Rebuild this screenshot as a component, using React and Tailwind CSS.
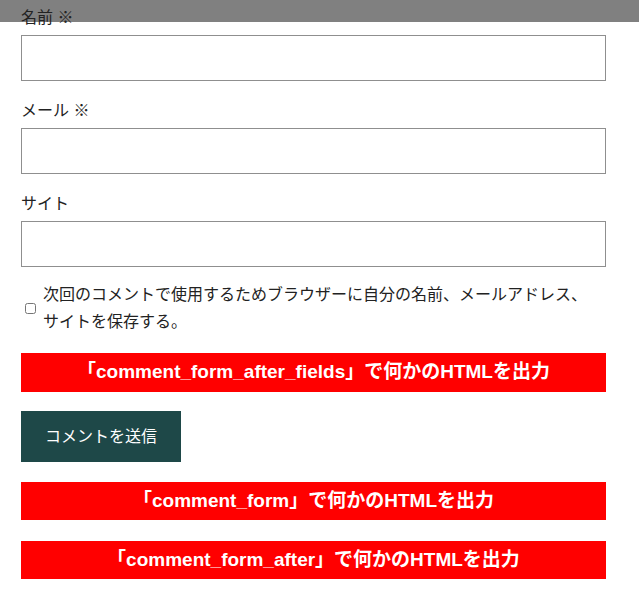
import React from "react";

const jp = { fontFamily: '"Liberation Sans", "Noto Sans CJK JP", sans-serif' };

function Field({ label, type = "text" }) {
  return (
    <div className="flex flex-col">
      <label className="text-base leading-6 text-[#222]">{label}</label>
      <input
        type={type}
        className="mt-[5px] h-[46px] w-full border border-[#8f8f8f] bg-white px-2 outline-none"
      />
    </div>
  );
}

function HookBar({ children }) {
  return (
    <div className="flex h-[38px] w-full items-center justify-center bg-[#ff0000] text-[19px] font-bold text-white">
      {children}
    </div>
  );
}

export default function App() {
  return (
    <div className="relative min-h-[603px] w-[639px] bg-white" style={jp}>
      {/* fixed header strip peeking over the form */}
      <div className="absolute left-0 top-0 h-[22px] w-full bg-[#808080]" />

      <form className="relative z-10 ml-[21px] flex w-[585px] flex-col pt-[6px]">
        <div className="flex flex-col gap-[18px]">
          <Field label="名前 ※" />
          <Field label="メール ※" type="email" />
          <Field label="サイト" type="url" />
        </div>

        <div className="mt-[14px] flex items-center">
          <input type="checkbox" className="ml-[4px] mr-[7px] h-[11px] w-[11px] shrink-0" />
          <p className="max-w-[550px] text-base leading-[27px] text-[#222]">
            次回のコメントで使用するためブラウザーに自分の名前、メールアドレス、サイトを保存する。
          </p>
        </div>

        <div className="mt-[18px] flex h-[39px] w-full items-center justify-center bg-[#ff0000] text-[19px] font-bold text-white">
          「comment_form_after_fields」で何かのHTMLを出力
        </div>

        <button
          type="button"
          className="mt-[19px] h-[51px] w-[160px] bg-[#1e4848] text-base text-white"
        >
          コメントを送信
        </button>

        <div className="mt-[20px] flex flex-col gap-[21px]">
          <HookBar>「comment_form」で何かのHTMLを出力</HookBar>
          <HookBar>「comment_form_after」で何かのHTMLを出力</HookBar>
        </div>
      </form>
    </div>
  );
}
